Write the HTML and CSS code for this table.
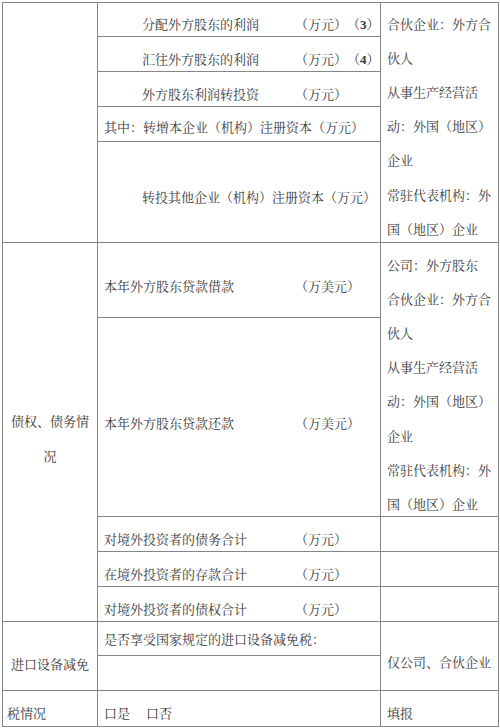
FILE: index.html
```html
<!DOCTYPE html>
<html lang="zh-CN">
<head>
<meta charset="utf-8">
<title>外商投资企业情况表</title>
<link rel="stylesheet" href="styles.css">
</head>
<body>
<div class="sheet">
  <div class="cell col1 span5"></div>
  <div class="cell col2 pt11"><div class="item"><span class="indent">分配外方股东的利润</span><span>（万元）（<b class="num">3</b>）</span></div></div>
  <div class="cell col3 span5 multi pt3">合伙企业：外方合<br>伙人<br>从事生产经营活<br>动：外国（地区）<br>企业<br>常驻代表机构：外<br>国（地区）企业</div>
  <div class="cell col2 pt12"><div class="item"><span class="indent">汇往外方股东的利润</span><span>（万元）（<b class="num">4</b>）</span></div></div>
  <div class="cell col2 pt12"><div class="item"><span class="indent">外方股东利润转投资</span><span>（万元）</span></div></div>
  <div class="cell col2 pt10">其中：转增本企业（机构）注册资本（万元）</div>
  <div class="cell col2 pt45"><span class="indent">转投其他企业（机构）注册资本（万元）</span></div>

  <div class="cell col1 span5 center multi-wide pt161">债权、债务情<br>况</div>
  <div class="cell col2 pt33"><div class="item"><span>本年外方股东贷款借款</span><span>（万美元）</span></div></div>
  <div class="cell col3 span2 multi pt4">公司：外方股东<br>合伙企业：外方合<br>伙人<br>从事生产经营活<br>动：外国（地区）<br>企业<br>常驻代表机构：外<br>国（地区）企业</div>
  <div class="cell col2 pt94"><div class="item"><span>本年外方股东贷款还款</span><span>（万美元）</span></div></div>
  <div class="cell col2 pt12"><div class="item"><span>对境外投资者的债务合计</span><span>（万元）</span></div></div>
  <div class="cell col3"></div>
  <div class="cell col2 pt12"><div class="item"><span>在境外投资者的存款合计</span><span>（万元）</span></div></div>
  <div class="cell col3"></div>
  <div class="cell col2 pt12"><div class="item"><span>对境外投资者的债权合计</span><span>（万元）</span></div></div>
  <div class="cell col3"></div>

  <div class="cell col1 span2 center pt32">进口设备减免</div>
  <div class="cell col2 pt7">是否享受国家规定的进口设备减免税：</div>
  <div class="cell col3 span2 pt30">仅公司、合伙企业</div>
  <div class="cell col2"></div>

  <div class="cell col1 first pt12">税情况</div>
  <div class="cell col2 pt12"><span>口是</span><span class="gap">口否</span></div>
  <div class="cell col3 pt12">填报</div>
</div>
</body>
</html>
```

FILE: styles.css
```css
html, body {
  margin: 0;
  padding: 0;
  background: #ffffff;
}

body {
  font-family: "Noto Serif CJK SC", "Noto Sans CJK SC", "Liberation Serif", serif;
  font-size: 13px;
  color: #3a3a3a;
  text-spacing-trim: space-all;
}

.sheet {
  box-sizing: border-box;
  width: 497px;
  margin: 2px 0 0 2px;
  display: grid;
  grid-template-columns: 94px 282px 117px;
  grid-template-rows: 33px 34px 34px 34px 100px 74px 198px 34px 34px 34px 33px 34px 35px;
  gap: 1px;
  padding: 1px;
  background: #858585;
}

.cell {
  background: #ffffff;
  line-height: 20px;
  white-space: nowrap;
  overflow: hidden;
  box-sizing: border-box;
}

.col1 { grid-column: 1; }
.col2 { grid-column: 2; padding-left: 6px; }
.col3 { grid-column: 3; padding-left: 6px; }

.span2 { grid-row: span 2; }
.span5 { grid-row: span 5; }

.center { text-align: center; padding-left: 6px; padding-right: 6px; }
.first { padding-left: 4px; }

.multi { line-height: 34.2px; }
.multi-wide { line-height: 34.6px; }

.item {
  display: grid;
  grid-template-columns: 191px auto;
}

.indent { padding-left: 38px; }

.num {
  font-family: "Liberation Serif", serif;
  font-weight: bold;
  font-size: 13px;
}

.gap { margin-left: 16px; }

.pt3 { padding-top: 3.5px; }
.pt4 { padding-top: 4.5px; }
.pt7 { padding-top: 7px; }
.pt10 { padding-top: 10px; }
.pt11 { padding-top: 11px; }
.pt12 { padding-top: 12px; }
.pt30 { padding-top: 30px; }
.pt32 { padding-top: 32px; }
.pt33 { padding-top: 33px; }
.pt45 { padding-top: 45px; }
.pt94 { padding-top: 94.5px; }
.pt161 { padding-top: 161px; }
```
